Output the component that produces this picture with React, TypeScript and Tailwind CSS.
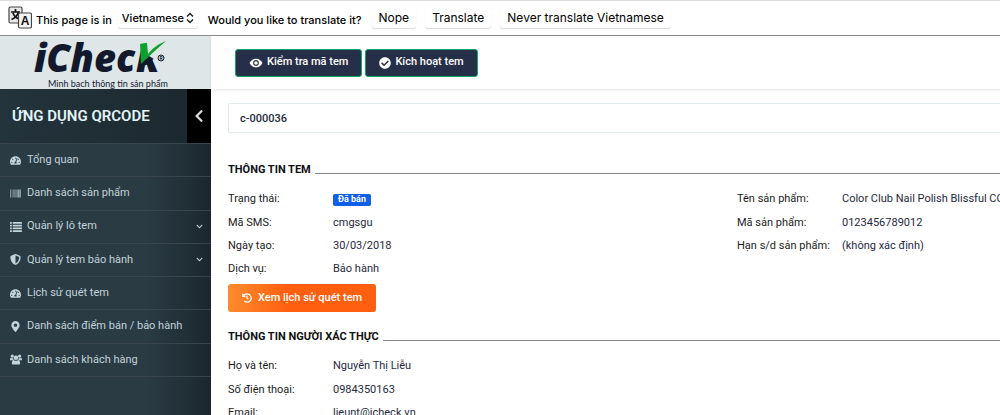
import React, { useState } from "react";
import { FaBarcode, FaCheckCircle, FaChevronDown, FaChevronLeft, FaMapMarkerAlt, FaTachometerAlt, FaHistory } from "react-icons/fa";
import { FaShieldHalved } from "react-icons/fa6";
import { MdRemoveRedEye } from "react-icons/md";

type IconProps = { className?: string };

function ListIcon({ className }: IconProps) {
  return (
    <svg viewBox="0 0 13 12" className={className} fill="currentColor">
      <path d="M0 1h2v2H0zM3 1h10v2H3zM0 4h2v2H0zM3 4h10v2H3zM0 7h2v2H0zM3 7h10v2H3zM0 10h2v2H0zM3 10h10v2H3z" />
    </svg>
  );
}

function GroupIcon({ className }: IconProps) {
  return (
    <svg viewBox="0 0 26 24" className={className} fill="currentColor">
      <circle cx="5" cy="4.500" r="3.500" />
      <circle cx="21" cy="4.500" r="3.500" />
      <circle cx="13" cy="8" r="5" />
      <path d="M0 13c0-4 1-5 2-5 2 1.500 4 1.500 5 1 0 2 .5 3.500 1.500 4.500H1.500C.5 14 0 14 0 13zM26 13c0-4-1-5-2-5-2 1.500-4 1.500-5 1 0 2-.5 3.500-1.500 4.500h7c1 .5 1.500.5 1.500-.5z" />
      <path d="M4 20c0-5 2-7 4-7 3 2.500 7 2.500 10 0 2 0 4 2 4 7 0 2-1 3-3 3H7c-2 0-3-1-3-3z" />
    </svg>
  );
}

const MENU = [
  { label: "Tổng quan", icon: FaTachometerAlt },
  { label: "Danh sách sản phẩm", icon: FaBarcode },
  { label: "Quản lý lô tem", icon: ListIcon, more: true },
  { label: "Quản lý tem bảo hành", icon: FaShieldHalved, more: true },
  { label: "Lịch sử quét tem", icon: FaTachometerAlt },
  { label: "Danh sách điểm bán / bảo hành", icon: FaMapMarkerAlt },
  { label: "Danh sách khách hàng", icon: GroupIcon },
];

function TranslateIcon() {
  return (
    <svg viewBox="0 0 24 24" className="h-6 w-6 shrink-0" fill="none" stroke="#444" strokeWidth="1.2">
      <rect x="1" y="1" width="13" height="16" rx="1.5" fill="#e8e8e8" />
      <path d="M3 6h9M7.500 3v3M10.500 6c-1 4-3.500 6-7 7.500M5 7c1 3 3 5 6 6" strokeWidth="1.7" stroke="#111" />
      <rect x="10.500" y="7" width="13" height="15" rx="1.500" fill="#f4f4f4" />
      <text x="17" y="19" textAnchor="middle" fontSize="12" fontWeight="700" fontFamily="Liberation Sans, sans-serif" fill="#111" stroke="none">A</text>
    </svg>
  );
}

function TranslateBar() {
  const btn = "h-[19px] rounded-[3px] bg-white px-[7px] text-xs leading-4 font-normal shadow-[0_1px_1px_rgba(0,0,0,0.15)]";
  return (
    <div className="flex h-9 shrink-0 items-center border-b border-[#8a8a8a] border-t border-t-[#ddd] bg-white pl-2 font-['Inter',sans-serif] text-[11px] font-medium whitespace-nowrap text-black">
      <TranslateIcon />
      <label htmlFor="lang" className="ml-1 pt-1">This page is in</label>
      <div className="relative ml-[6px] flex items-center">
        <select id="lang" className="h-[19px] w-20 appearance-none rounded-[3px] bg-white pl-1 shadow-[0_1px_1px_rgba(0,0,0,0.15)]">
          <option>Vietnamese</option>
        </select>
        <svg viewBox="0 0 8 12" className="pointer-events-none absolute right-1 h-3 w-2" fill="none" stroke="#222" strokeWidth="1.500">
          <path d="M1 4.500l3-3 3 3M1 7.500l3 3 3-3" />
        </svg>
      </div>
      <span className="ml-[10px] pt-1">Would you like to translate it?</span>
      <div className="ml-[10px] flex gap-[9px]">
        <button className={btn}>Nope</button>
        <button className={btn}>Translate</button>
        <button className={btn}>Never translate Vietnamese</button>
      </div>
    </div>
  );
}

function Logo() {
  return (
    <svg viewBox="0 0 211 53" className="h-[53px] w-full overflow-visible" role="img" aria-label="iCheck">
      <g fontFamily="Open Sans, sans-serif" fontWeight="800" fontStyle="italic" fontSize="38" fill="#12192c">
        <text x="34" y="36">iChec</text>
        <text x="136" y="36">k</text>
      </g>
      <path d="M139 3h28v15l-13 5-15-9z" fill="#dfe6e8" />
      <path d="M140 8c3-1 5-1 7-1l1 11c5-6 10-10 18-13-8 7-16 14-25 23z" fill="#0ca12f" />
      <circle cx="161" cy="22" r="3" fill="none" stroke="#12192c" strokeWidth="1" />
      <text x="161" y="24" textAnchor="middle" fontFamily="Roboto, sans-serif" fontWeight="700" fontSize="5" fill="#12192c">R</text>
      <text x="48" y="51" fontFamily="Lato, sans-serif" fontSize="9" fill="#12192c">Minh bạch thông tin sản phẩm</text>
    </svg>
  );
}

function Sidebar() {
  return (
    <aside className="flex w-[211px] shrink-0 flex-col bg-linear-to-r from-[#2a3b44] from-70% to-[#1b272e]">
      <a href="#" className="block bg-[#dfe6e8]">
        <Logo />
      </a>
      <div className="flex h-[54px] items-center justify-between bg-linear-to-r from-[#24343c] to-[#1b272e] pl-3">
        <h1 className="text-[15px] font-semibold text-[#e3f4fa]">ỨNG DỤNG QRCODE</h1>
        <button aria-label="Thu gọn" className="flex h-full w-6 items-center justify-center bg-black text-[#ddd]">
          <FaChevronLeft size={14} />
        </button>
      </div>
      <nav>
        <ul className="grid h-[234px] auto-rows-fr border-t border-[#3a444b]">
          {MENU.map(({ label, icon: Icon, more }) => (
            <li key={label} className="border-b border-[#3a444b]">
              <a href="#" className="flex h-full items-center pr-2 pl-[10px] text-[11px] text-[#c3d3da]">
                <span className="w-[17px]">
                  <Icon className="h-[11px] w-auto" />
                </span>
                <span className="flex-1 whitespace-nowrap">{label}</span>
                {more && <FaChevronDown size={7} />}
              </a>
            </li>
          ))}
        </ul>
      </nav>
    </aside>
  );
}

function SectionTitle({ children }: { children: React.ReactNode }) {
  return (
    <h2 className="flex h-5 items-center gap-1 text-[11px] font-bold whitespace-nowrap text-[#111]">
      {children}
      <span className="mt-[6px] h-px flex-1 bg-[#888]" />
    </h2>
  );
}

function Field({ label, children }: { label: string; children: React.ReactNode }) {
  return (
    <div className="flex items-center whitespace-nowrap">
      <dt className="w-[105px] shrink-0 text-[#1c1c1c]">{label}:</dt>
      <dd className="text-[#1f2940]">{children}</dd>
    </div>
  );
}

export default function App() {
  const [code, setCode] = useState("c-000036");
  const action = "flex h-7 items-center gap-1 rounded-[3px] border border-[#12a767] bg-[#262f48] px-[13px] text-[11px] font-medium text-white";

  return (
    <div className="flex h-screen flex-col overflow-hidden bg-white font-['Roboto',sans-serif]">
      <TranslateBar />
      <div className="flex min-h-0 flex-1">
        <Sidebar />
        <main className="min-w-0 flex-1">
          <header className="flex h-[54px] items-center gap-[3px] border-b border-[#eee] pl-6 shadow-[0_1px_2px_rgba(0,0,0,0.06)]">
            <button className={action}>
              <MdRemoveRedEye size={14} />
              Kiểm tra mã tem
            </button>
            <button className={action}>
              <FaCheckCircle size={12} />
              Kích hoạt tem
            </button>
          </header>

          <div className="pt-[13px] pl-[17px] text-[11px]">
            <input
              aria-label="Mã tem"
              value={code}
              onChange={(e) => setCode(e.target.value)}
              className="block h-[30px] w-full rounded-l-[2px] border border-r-0 border-[#dfe8ea] px-[11px] font-medium text-[#222b40] outline-none"
            />
            <section className="mt-[27px]">
              <SectionTitle>THÔNG TIN TEM</SectionTitle>
              <div className="mt-2 grid grid-cols-[1fr_263px]">
                <dl className="grid h-[93px] auto-rows-fr">
                  <Field label="Trạng thái">
                    <span className="flex h-3 items-center rounded-[2px] bg-[#0f5fe8] px-[5px] text-[9px] font-bold text-white">Đã bán</span>
                  </Field>
                  <Field label="Mã SMS">cmgsgu</Field>
                  <Field label="Ngày tạo">30/03/2018</Field>
                  <Field label="Dịch vụ">Bảo hành</Field>
                </dl>
                <dl className="grid h-[70px] auto-rows-fr">
                  <Field label="Tên sản phẩm">Color Club Nail Polish Blissful CC</Field>
                  <Field label="Mã sản phẩm">0123456789012</Field>
                  <Field label="Hạn s/d sản phẩm">(không xác định)</Field>
                </dl>
              </div>
              <button className="mt-[3px] flex h-7 items-center gap-[6px] rounded-[3px] bg-linear-to-r from-[#ff8a2b] to-[#ff5f0f] to-40% px-[14px] font-medium text-white">
                <FaHistory size={10} />
                Xem lịch sử quét tem
              </button>
            </section>

            <section className="mt-[15px]">
              <SectionTitle>THÔNG TIN NGƯỜI XÁC THỰC</SectionTitle>
              <dl className="mt-2 grid h-[70px] auto-rows-fr">
                <Field label="Họ và tên">Nguyễn Thị Liễu</Field>
                <Field label="Số điện thoại">0984350163</Field>
                <Field label="Email">lieunt@icheck.vn</Field>
              </dl>
            </section>
          </div>
        </main>
      </div>
    </div>
  );
}
